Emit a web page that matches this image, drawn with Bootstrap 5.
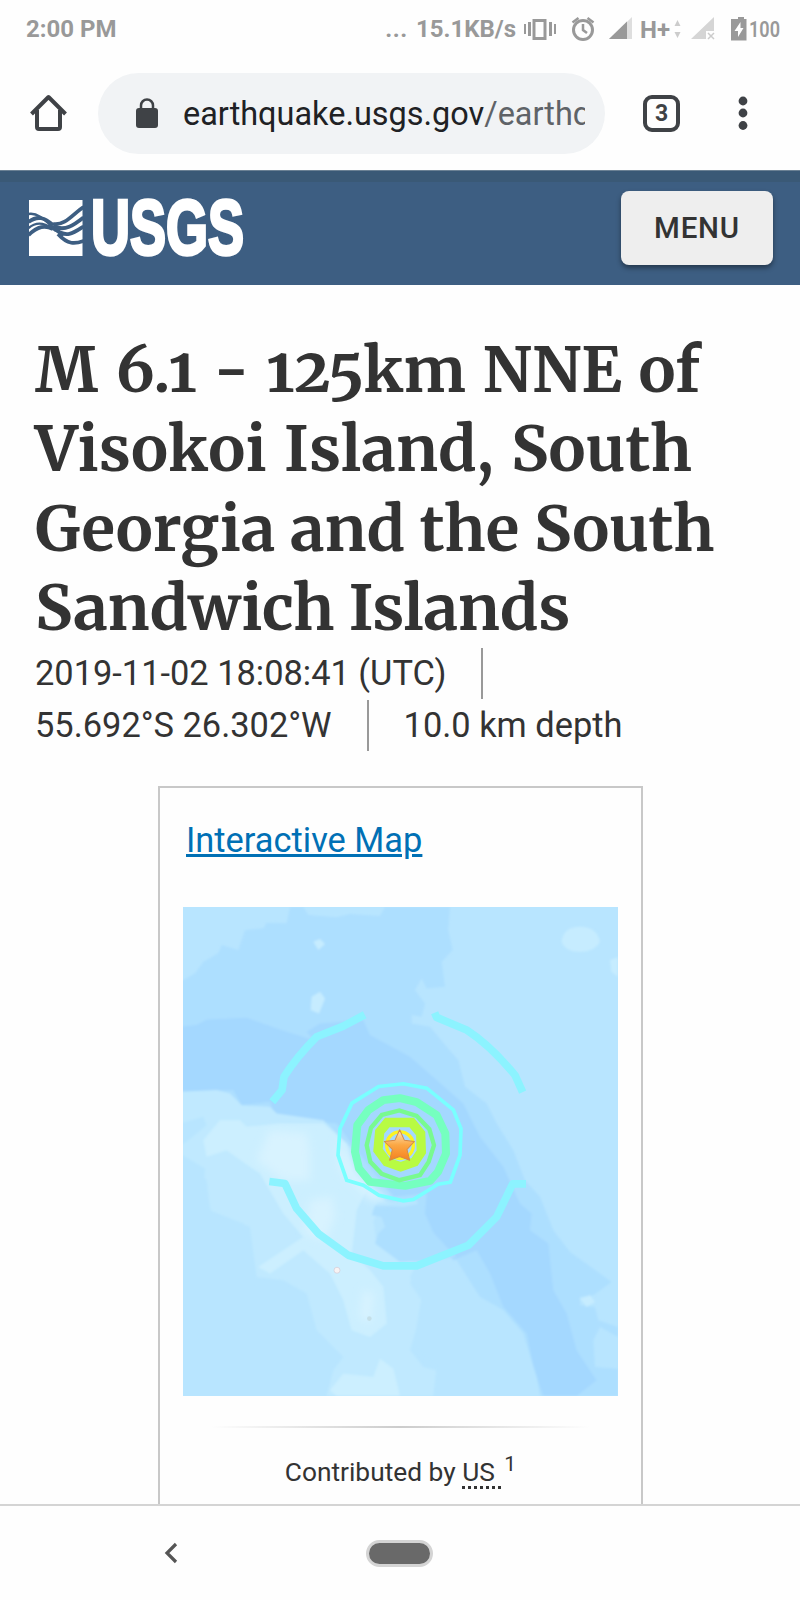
<!DOCTYPE html>
<html lang="en">
<head>
<meta charset="utf-8">
<title>M 6.1 - 125km NNE of Visokoi Island</title>
<link rel="stylesheet" href="https://cdn.jsdelivr.net/npm/bootstrap@5.3.0/dist/css/bootstrap.min.css">
<style>
body{font-family:Roboto,"Liberation Sans",sans-serif;color:#333;background:#fefefe;height:1600px;overflow:hidden}
svg{display:block;flex:none;overflow:visible}
.status{height:56px;padding:1px 20px 0 26px;color:#999;font-weight:700;font-size:24px;line-height:56px}
.status span{white-space:nowrap}
.dots{letter-spacing:.6px;margin-right:8px}
.tools{height:114px;padding:0 0 0 30px}
.omni{width:507px;height:81px;margin-left:31px;padding:2px 20px 0 37px;background:#f1f3f5;font-size:32.45px;color:#202124}
.omni .path{color:#5f6368}
.url{width:402px;overflow:hidden;white-space:nowrap;margin-left:24px;padding-top:1px}
.tabs{width:37px;height:37px;border:4px solid #3f4246;border-radius:9px;margin-left:38px;font-size:23px;font-weight:700;line-height:29px;color:#3f4246}
.site{height:115px;background:linear-gradient(#3a5976 0 11px,#3d5e82 11px);padding:0 27px 0 29px;border-top:1px solid #6b8194}
.btn-menu{width:152px;height:74px;background:#eee;color:#333;border:0;border-radius:8px;font-size:29.5px;font-weight:500;letter-spacing:.8px;box-shadow:0 3px 5px rgba(0,0,0,.4)}
.title{margin:46px 0 0;padding-left:35px;font:700 62px/79.3px Merriweather,"Liberation Serif",serif;color:#333;font-variant-numeric:oldstyle-nums}
.ln{display:table;white-space:nowrap}
.ln1{word-spacing:2px;letter-spacing:.05px}
.ln2{font-kerning:none;word-spacing:2.5px;letter-spacing:.1px}
.ln4{letter-spacing:-.13px}
.facts{padding-left:35px;font-size:34.4px;height:103px}
.facts>div{height:51.5px;white-space:nowrap}
.rule{width:2px;height:51px;background:#999}
.summary{width:485px;height:718px;margin:35px auto 0 158px;border:2px solid #c8c8c8;border-bottom:0;padding:26px 23px 0}
.summary a{font-size:34.4px;line-height:52px;height:52px;color:#0070b5;margin-left:3px;text-decoration-thickness:3px}
.map{margin-top:41px}
.fade-rule{height:2px;margin:30px 28px 0;background:linear-gradient(90deg,transparent,#ccc,transparent)}
.credit{font-size:26.3px;line-height:36px;margin-top:26px}
.credit abbr{text-decoration:none;border-bottom:3px dotted #333;display:inline-block;line-height:28px}
.credit sup{font-size:21px;top:-.5em;margin-left:3px}
.navbtns{height:96px;border-top:2px solid #d4d4d4;background:#fefefe;padding-left:164px}
.home-pill{width:67px;height:27px;border:3px solid #d4d4d4;border-radius:14px;background:#696969;margin-left:188px}
</style>
<script src="https://cdn.jsdelivr.net/npm/bootstrap@5.3.0/dist/js/bootstrap.bundle.min.js"></script>
</head>
<body>
<div class="status d-flex align-items-center">
  <span>2:00 PM</span>
  <span class="ms-auto dots">...</span><span>15.1KB/s</span>
  <svg class="ms-1" width="260" height="56" viewBox="520 0 260 56">
    <g fill="none" stroke="#999" stroke-width="3"><path d="M534 19.500h11v18h-11zM529.500 21v14M550.500 21v14"/><path stroke-width="2" d="M525 23v10M555 23v10"/><circle cx="583" cy="29" r="9.500"/><path stroke-width="2.500" d="M583 23v6l4 3M572.500 21.500l6-4.500M593.500 21.500l-6-4.500"/></g>
    <path fill="#dedede" d="M632 16v22H609z"/><path fill="#999" d="M627 20.500V38h-18z"/>
    <text x="640" y="36.500" font-size="24" font-weight="700" fill="#999" textLength="30">H+</text>
    <path fill="#ccc" d="M674.500 25l3-6 3 6zM674.500 31l3 6 3-6z"/>
    <path fill="#d5d5d5" d="M714 16v14h-8v8h-15z"/><path stroke="#ccc" stroke-width="1.500" d="M708 32l6 6M714 32l-6 6"/>
    <path fill="#999" d="M735 18h3v-2h6v2h2.500v21.500H731V18z"/><path fill="#fefefe" d="M740.500 21l-6 9h3.500v6l5.500-9h-3z"/>
    <text x="749" y="36" font-size="21.500" font-weight="600" fill="#999" textLength="31" lengthAdjust="spacingAndGlyphs">100</text>
  </svg>
</div>
<div class="tools d-flex align-items-center">
  <svg width="37" height="38" viewBox="0 0 37 38" fill="none" stroke="#3f4246" stroke-width="4" stroke-linejoin="round"><path d="M1.500 20L18.500 3l17 17"/><path d="M7 16v17q0 2 2 2h19q2 0 2-2V16"/></svg>
  <div class="omni rounded-pill d-flex align-items-center">
    <svg width="24" height="30" viewBox="0 0 24 30"><rect x="1" y="9" width="22" height="20" rx="3" fill="#3f4246"/><path d="M6 10V6.500a6 6 0 0 1 12 0V10" fill="none" stroke="#3f4246" stroke-width="2.500"/></svg>
    <div class="url">earthquake.usgs.gov<span class="path">/earthq</span></div>
  </div>
  <div class="tabs text-center">3</div>
  <svg width="10" height="34" viewBox="0 0 10 34" style="margin-left:58px" fill="#3f4246"><circle cx="5" cy="5" r="4.400"/><circle cx="5" cy="17" r="4.400"/><circle cx="5" cy="29.500" r="4.400"/></svg>
</div>
<header class="site d-flex align-items-center justify-content-between">
  <svg width="216" height="60" viewBox="0 0 216 60">
    <path fill="#fff" d="M0 2h53.500v56H0z"/>
    <g fill="none" stroke="#3d5e82"><path stroke-width="3.800" d="M24 26C36 28 44 16 54.500 9M24 28C36 34 45 27 54.500 19.500M26 31C38 41 46 34 54.500 28.500M29 36C39 47 46 46 54.500 43M-.5 24C9 17 16 20 24 27M-.5 37C9 28 16 27 24 31"/><path stroke-width="2.400" d="M-.5 16C11 14 19 26 34 38M-.5 30C9 22 18 26 27 33"/></g>
    <text x="62" y="56" font-family="Liberation Sans" font-weight="700" font-size="77" fill="#fff" stroke="#fff" stroke-width="3.400" textLength="153" lengthAdjust="spacingAndGlyphs">USGS</text>
  </svg>
  <button class="btn btn-menu p-0" type="button">MENU</button>
</header>
<h1 class="title">
  <span class="ln ln1">M 6.1 - 125km NNE of</span>
  <span class="ln ln2">Visokoi Island, South</span>
  <span class="ln">Georgia and the South</span>
  <span class="ln ln4">Sandwich Islands</span>
</h1>
<div class="facts">
  <div class="d-flex align-items-center"><span>2019-11-02 18:08:41 (UTC)</span><i class="rule" style="margin-left:35px"></i></div>
  <div class="d-flex align-items-center"><span>55.692°S 26.302°W</span><i class="rule" style="margin:0 35px"></i><span>10.0 km depth</span></div>
</div>
<section class="summary">
  <a href="#" class="d-inline-block">Interactive Map</a>
  <svg class="map" width="435" height="489" viewBox="39 51 1305 1466" preserveAspectRatio="none" style="overflow:hidden">
    <defs><linearGradient id="st" x2="0" y2="1"><stop stop-color="#fde9c0"/><stop offset=".5" stop-color="#fba744"/><stop offset="1" stop-color="#f58220"/></linearGradient><filter id="soft"><feGaussianBlur stdDeviation="2.500"/></filter><filter id="haze"><feGaussianBlur stdDeviation="12"/></filter></defs>
    <path fill="#b8e5ff" d="M39 51h1305v1466H39z"/>
    <g filter="url(#soft)">
      <path fill="#addfff" d="M30 275L75 250 100 215 145 190 155 165 205 180 225 120 280 115 290 98 350 100 360 51H400L415 75 500 82 540 72 630 78 645 51H840L835 120 848 180 815 215 825 290 770 295 755 265 735 300 765 340 755 380 725 375 725 400 780 410 830 470 865 510 885 590 950 640 980 700 1030 780 1065 870 1110 920 1150 1020 1200 1085 1325 1175 1270 1215 1230 1220 1230 1245 1275 1250 1285 1290 1344 1310V1340L1290 1310 1270 1350 1275 1430 1344 1435V1517H1110L1080 1420 1060 1330 1000 1260 930 1220 860 1110 790 1050 750 1000 740 940 600 930 500 780 200 650 30 600z"/>
      <path fill="#a4d8ff" d="M30 410L80 405 110 388 230 383 330 418 430 450 410 425 450 400 580 390 600 435 720 500 800 570 880 640 930 740 1000 830 1050 940 1085 970 1080 1020 1135 1060 1150 1200 1190 1270 1220 1380 1280 1470 1220 1517H1120L1090 1430 1070 1330 1000 1250 960 1150 920 1080 850 1110 800 1050 765 970 770 910 670 920 560 780 500 700 400 690 310 670 300 635 215 645 190 600 30 605z"/>
      <path fill="#c0e9ff" d="M30 605L140 600 180 610 215 645 300 650 320 670 460 690 540 770 600 900 650 935 610 990 620 1060 740 1120 720 1180 755 1230 740 1310 720 1380 760 1430 800 1440 790 1517H470L490 1440 520 1400 440 1320 410 1210 340 1170 260 1160 240 1010 120 960 110 870 30 790z"/>
      <path fill="#b8e5ff" d="M620 935L740 930 770 1010 850 1110 930 1220 1000 1260 1060 1330 1100 1460 1110 1517H790L800 1430 730 1370 755 1220 720 1160 740 1120 620 1060zM30 700l70-20 10 25-60 50-20 10zM30 790l75 45-5 60 25 70 95 35 35 130 0 60H30z"/>
      <path fill="#addfff" d="M615 945L700 950 750 940 775 1010 830 1070 860 1100 790 1110 690 1115 650 1085 615 1060 625 1030 645 1010 635 980 605 975z"/>
      <path fill="#ccefff" d="M100 750L150 690 210 690 230 710 330 700 460 700 530 760 550 850 590 900 560 960 545 1090 600 1140 640 1190 650 1300 600 1340 545 1320 520 1230 480 1150 400 1080 300 1150 265 1130 340 1080 400 1040 340 970 270 850 240 830 170 780 110 800zM480 1500l40-50 90 10 20-55 40 30 20 82H500z"/>
      <path fill="#c6ecff" d="M1175 155q5-45 55-45t60 45q-15 30-60 30t-55-30zM430 155l20-8 15 15-20 18zM425 320l25-15 15 20-18 45-25-10zM1230 1225l30-10 15 20-25 15zM1320 210l24-8v58l-20-15z"/>
    </g>
    <g filter="url(#haze)" fill="#d8f3ff"><path d="M300 720l110 10 10 60v80l-80 0-80-60zM420 930l65-10 10 60-30 70-60-20zM580 1200l30 10-10 90-30-20z"/><path d="M500 750l70 110 90 70-60 0-90-90z"/></g>
    <circle cx="501" cy="1140" r="9" fill="#f8f3f4" stroke="#d1c9d3" stroke-width="2"/><circle cx="598" cy="1285" r="7" fill="#c5dfe8"/>
    <g fill="none" stroke="#8cf3ff" stroke-width="23" stroke-linejoin="round"><path d="M584 374L520 408 440 440Q380 500 342 560L336 600 307 635"/><path d="M794 368L800 382 890 420Q960 465 1035 555L1058 606"/><path d="M298 874L345 880 380 955 445 1030 535 1095 640 1127H740L895 1065 980 980 1028 881H1068"/></g>
    <path fill="none" stroke="#79ffff" stroke-width="11" d="M626 589L700 581 770 594 850 659 873 715 870 795 841 876 804 882 730 928 700 932 627 915 580 885 530 870 504 795 510 715 546 639z"/>
    <path fill="none" stroke="#75ffbf" stroke-width="24" stroke-linejoin="round" d="M640 630L690 624 740 636 800 675 826 730 828 790 804 845 780 872 705 887 600 875 567 835 555 785 562 705 595 660z"/>
    <path fill="none" stroke="#78fa90" stroke-width="13" d="M636 674L688 661 740 677 778 717 792 765 776 815 750 855 688 870 635 851 601 815 590 765 603 713z"/>
    <path fill="none" stroke="#b8fb43" stroke-width="28" d="M652 697H725L752 730 754 785 734 815 692 830 650 815 624 780 629 725z"/>
    <circle cx="690" cy="765" r="40" fill="none" stroke="#fcf322" stroke-width="10"/>
    <path fill="url(#st)" stroke="#d58a45" stroke-width="3" stroke-linejoin="round" d="M689 719l14 31 30 4-22 24 8 32-30-11-30 11 8-32-24-24 32-4z"/>
  </svg>
  <div class="fade-rule"></div>
  <div class="credit text-center">Contributed by <abbr>US&nbsp;</abbr><sup>1</sup></div>
</section>
<div class="navbtns d-flex align-items-center">
  <svg width="14" height="22" viewBox="0 0 14 22" fill="none" stroke="#555" stroke-width="3.200"><path d="M12 2L3 11l9 9"/></svg>
  <div class="home-pill"></div>
</div>
</body>
</html>
